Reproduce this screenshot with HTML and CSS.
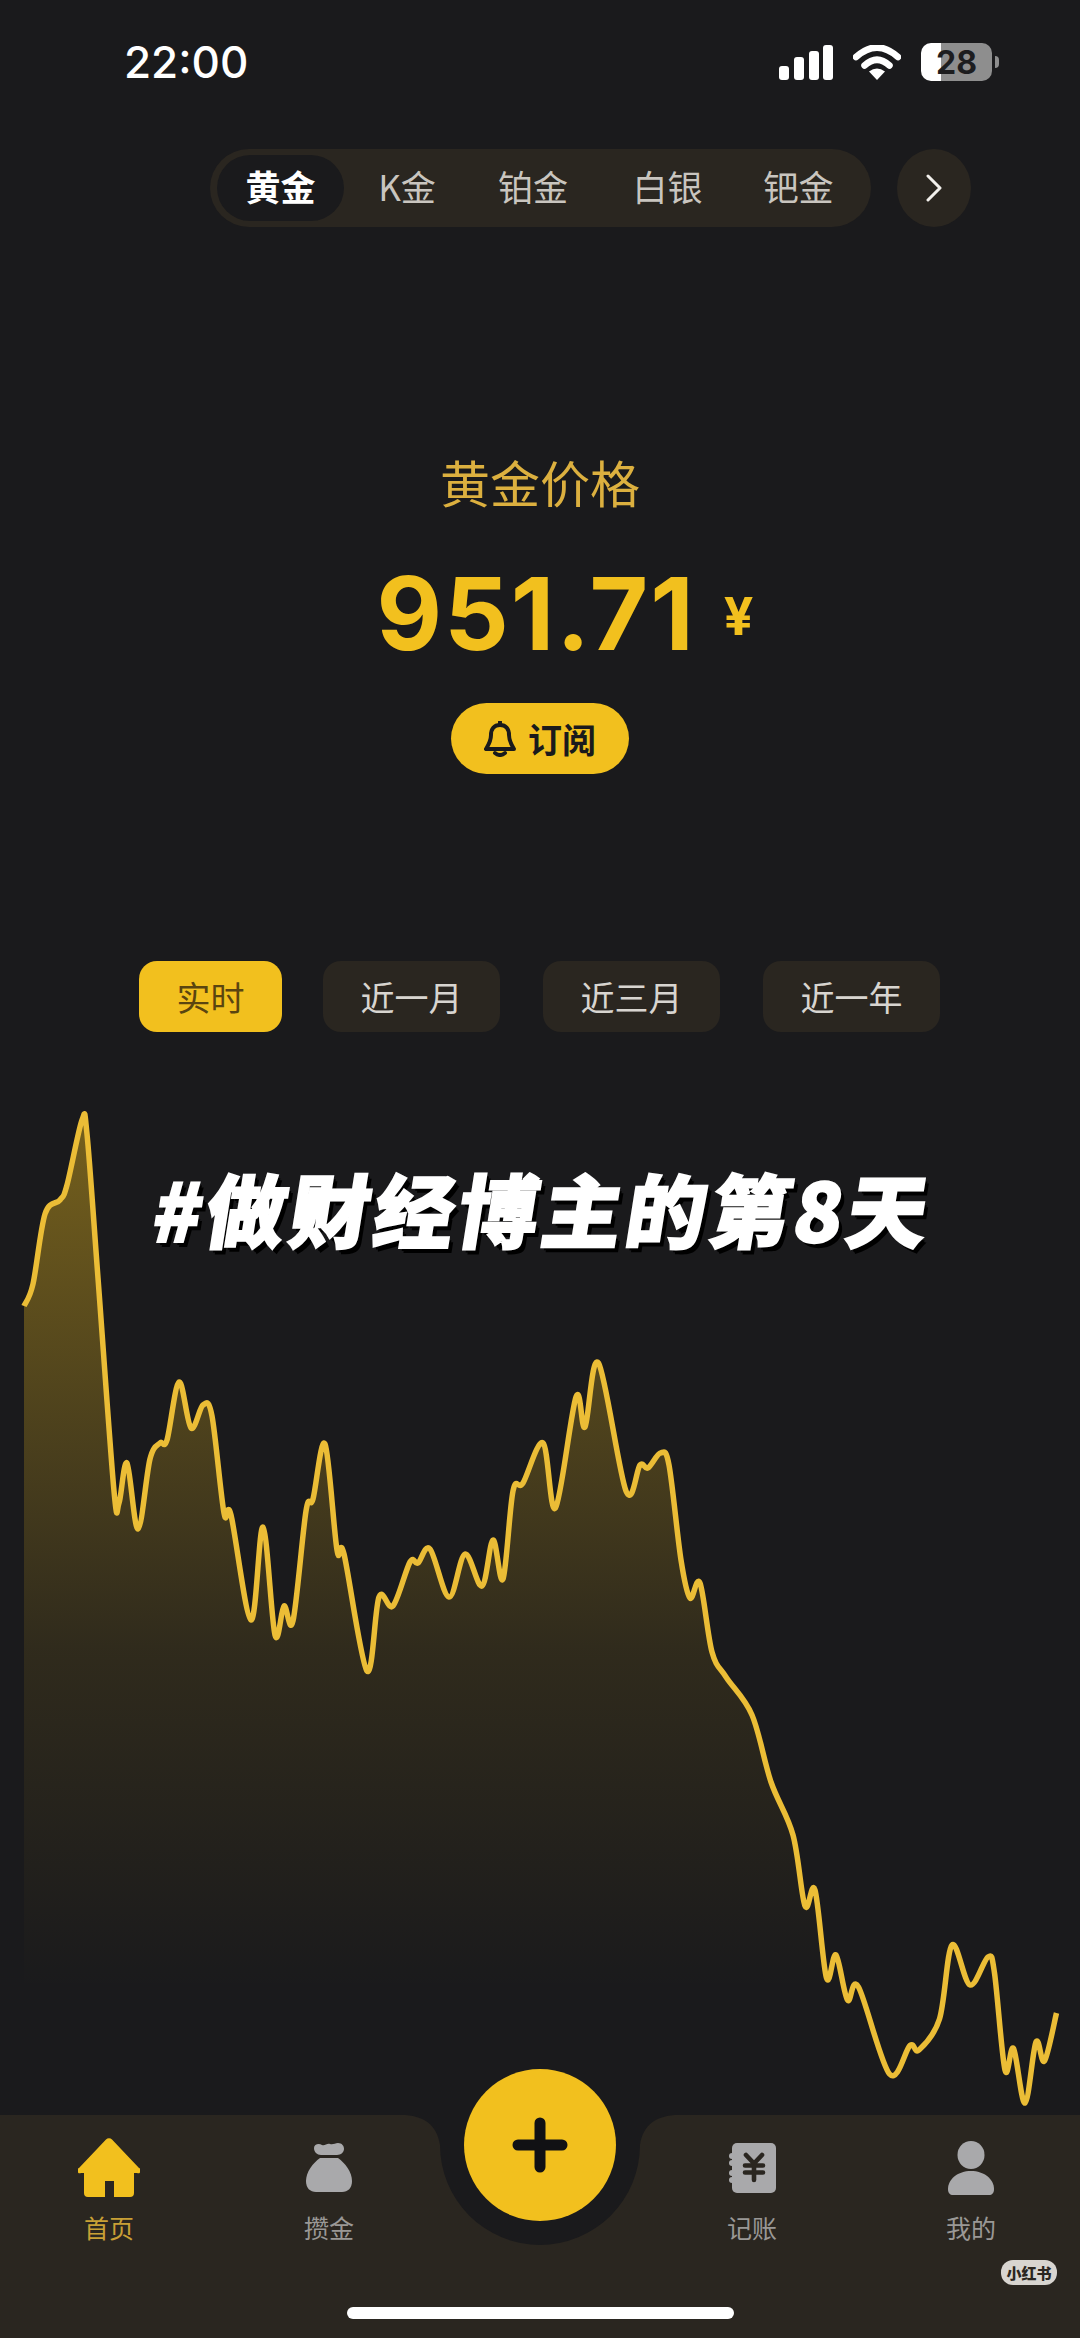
FILE: index.html
```html
<!DOCTYPE html>
<html lang="zh-CN">
<head>
    <meta charset="utf-8">
    <title>黄金价格</title>
    <link rel="stylesheet" href="styles.css">
</head>
<body>
    <div class="phone">
        <div class="status-bar">
            <div class="time">22:00</div>
            <div class="status-icons">
                <svg class="signal" viewBox="0 0 54 35" width="54" height="35">
                    <rect x="0" y="21" width="10" height="14" rx="3"/>
                    <rect x="15" y="12" width="10" height="23" rx="3"/>
                    <rect x="30" y="6" width="10" height="29" rx="3"/>
                    <rect x="44" y="0" width="10" height="35" rx="3"/>
                </svg>
                <svg class="wifi" viewBox="0 0 48 35" width="48" height="35">
                    <path d="M3 12Q24 -7 45 12" fill="none" stroke="#fff" stroke-width="6.5" stroke-linecap="round"/>
                    <path d="M11.5 20.5Q24 9 36.5 20.5" fill="none" stroke="#fff" stroke-width="6.5" stroke-linecap="round"/>
                    <path d="M24 35L16 26.5Q24 20.5 32 26.5Z" fill="#fff"/>
                </svg>
                <div class="battery"><span>28</span></div>
            </div>
        </div>

        <div class="metal-row">
            <div class="metal-tabs">
                <div class="metal-tab active">黄金</div>
                <div class="metal-tab k">K金</div>
                <div class="metal-tab pt">铂金</div>
                <div class="metal-tab ag">白银</div>
                <div class="metal-tab pd">钯金</div>
            </div>
            <div class="metal-next">
                <svg viewBox="0 0 18 28" width="18" height="28">
                    <path d="M3 2L15 14L3 26" fill="none" stroke="#f2f0ec" stroke-width="3" stroke-linecap="round" stroke-linejoin="round"/>
                </svg>
            </div>
        </div>

        <div class="price-title">黄金价格</div>
        <div class="price-row">
            <span class="price">951.71</span>
            <span class="price-unit">¥</span>
        </div>
        <div class="subscribe-wrap">
            <div class="subscribe">
                <svg viewBox="0 0 32 36" width="32" height="36">
                    <path d="M16 4C10 4 7 8 7 14C7 20 5 23 2 28H30C27 23 25 20 25 14C25 8 22 4 16 4Z" fill="none" stroke="#1a1a1c" stroke-width="4" stroke-linejoin="round"/>
                    <path d="M16 1V4M11 32Q16 36 21 32" fill="none" stroke="#1a1a1c" stroke-width="4" stroke-linecap="round"/>
                </svg>
                <span>订阅</span>
            </div>
        </div>

        <div class="ranges">
            <div class="range active">实时</div>
            <div class="range">近一月</div>
            <div class="range">近三月</div>
            <div class="range">近一年</div>
        </div>

        <div class="chart">
            <svg viewBox="0 1100 1080 1015" width="1080" height="1015">
                <defs>
                    <linearGradient id="chartFill" gradientUnits="userSpaceOnUse" x1="0" y1="1116" x2="0" y2="1990">
                        <stop offset="0" stop-color="#f2c01e" stop-opacity="0.42"/>
                        <stop offset="0.44" stop-color="#f2c01e" stop-opacity="0.19"/>
                        <stop offset="0.61" stop-color="#f2c01e" stop-opacity="0.1"/>
                        <stop offset="1" stop-color="#f2c01e" stop-opacity="0"/>
                    </linearGradient>
                </defs>
                <path id="chartArea" fill="url(#chartFill)"/>
                <path id="chartLine" fill="none" stroke="#ebbd36" stroke-width="5.5" stroke-linejoin="round"/>
            </svg>
            <div class="caption"><span>#做财经博主的第8天</span></div>
        </div>

        <div class="nav">
            <svg class="nav-bg" viewBox="0 0 1080 223" width="1080" height="223">
                <path d="M0 0H401C424 0 437 10 440 30A100 100 0 0 0 640 30C643 10 656 0 679 0H1080V223H0Z" fill="#2a2620"/>
            </svg>
            <div class="nav-item active">
                <div class="nav-icon">
                    <svg viewBox="0 0 62 59" width="62" height="59">
                        <path d="M28 1.5a4 4 0 0 1 6 0L61 30a2.5 2.5 0 0 1-2 5h-3v20a4 4 0 0 1-4 4H36V43H27v16H10a4 4 0 0 1-4-4V35H3a2.5 2.5 0 0 1-2-5z" fill="#f2c01e"/>
                    </svg>
                </div>
                <span>首页</span>
            </div>
            <div class="nav-item">
                <div class="nav-icon">
                    <svg viewBox="0 0 46 49" width="46" height="49">
                        <path d="M8 5C8 1 13 0 16 2C19 3 21 0 24 1C27 2 29 0 32 0C36 0 38 3 38 6C38 9 35 12 31 12H15C11 12 8 9 8 5Z" fill="#a9a9ab"/>
                        <path d="M14 15H32C39 20 46 29 46 38C46 45 42 49 36 49H10C4 49 0 45 0 38C0 29 7 20 14 15Z" fill="#a9a9ab"/>
                    </svg>
                </div>
                <span>攒金</span>
            </div>
            <div class="nav-gap"></div>
            <div class="nav-item">
                <div class="nav-icon">
                    <svg viewBox="0 0 47 50" width="47" height="50">
                        <rect x="3" y="0" width="44" height="50" rx="5" fill="#a9a9ab"/>
                        <circle cx="3" cy="13" r="3" fill="#a9a9ab"/>
                        <circle cx="3" cy="20" r="3" fill="#a9a9ab"/>
                        <circle cx="3" cy="30" r="3" fill="#a9a9ab"/>
                        <circle cx="3" cy="37" r="3" fill="#a9a9ab"/>
                        <path d="M17 12L25 20.5L33 12M16 22.5H34M16 29.5H34M25 21V37" fill="none" stroke="#2a2620" stroke-width="4.6" stroke-linecap="round" stroke-linejoin="round"/>
                    </svg>
                </div>
                <span>记账</span>
            </div>
            <div class="nav-item">
                <div class="nav-icon">
                    <svg viewBox="0 0 46 54" width="46" height="54">
                        <ellipse cx="23" cy="14" rx="13.5" ry="14" fill="#a9a9ab"/>
                        <path d="M0 48C0 38 10 30 23 30S46 38 46 48C46 52 44 54 41 54H5C2 54 0 52 0 48Z" fill="#a9a9ab"/>
                    </svg>
                </div>
                <span>我的</span>
            </div>
            <div class="fab">
                <svg viewBox="0 0 56 56" width="56" height="56">
                    <path d="M6 28H50M28 6V50" fill="none" stroke="#111114" stroke-width="11" stroke-linecap="round"/>
                </svg>
            </div>
            <div class="watermark">小红书</div>
            <div class="home-bar"></div>
        </div>
    </div>

    <script src="chart.js"></script>
</body>
</html>
```

FILE: styles.css
```css
* {
    box-sizing: border-box;
}

body {
    margin: 0;
    background-color: #1a1a1c;
    font-family: "Noto Sans CJK SC", "Noto Sans", sans-serif;
}

.phone {
    width: 1080px;
    height: 2338px;
    overflow: hidden;
    display: flex;
    flex-direction: column;
    background-color: #1a1a1c;
}

/* status bar */
.status-bar {
    height: 124px;
    flex: none;
    padding: 0 88px 0 124px;
    display: flex;
    justify-content: space-between;
    align-items: center;
    color: #fff;
}

.time {
    font-family: Inter, sans-serif;
    font-size: 44px;
    font-weight: 500;
}

.status-icons {
    display: flex;
    align-items: center;
    gap: 20px;
}

.signal {
    fill: #fff;
}

.battery {
    position: relative;
    width: 71px;
    height: 38px;
    border-radius: 10px;
    background: linear-gradient(to right, #fff 28%, #8e8e8e 28%);
    display: flex;
    justify-content: center;
    align-items: center;
    color: #1d1d1f;
    font-family: Inter, sans-serif;
    font-size: 32px;
    font-weight: 700;
}

.battery::after {
    content: "";
    position: absolute;
    right: -7px;
    top: 13px;
    width: 4px;
    height: 12px;
    border-radius: 0 4px 4px 0;
    background-color: #8e8e8e;
}

/* metal tabs */
.metal-row {
    flex: none;
    margin-top: 25px;
    padding-left: 210px;
    display: flex;
    gap: 26px;
}

.metal-tabs {
    width: 661px;
    height: 78px;
    padding: 6px 7px;
    border-radius: 39px;
    background-color: #2a2620;
    display: flex;
    align-items: stretch;
}

.metal-tab {
    padding-bottom: 5px;
    font-size: 35px;
    color: #c9c5bf;
    display: flex;
    justify-content: center;
    align-items: center;
}

.metal-tab.active {
    width: 127px;
    border-radius: 33px;
    background-color: #1a1a1c;
    color: #fff;
    font-weight: 700;
}

.metal-tab.k {
    width: 126px;
}

.metal-tab.pt {
    width: 126px;
}

.metal-tab.ag {
    width: 143px;
}

.metal-tab.pd {
    width: 119px;
}

.metal-next {
    width: 74px;
    height: 78px;
    border-radius: 50%;
    background-color: #2a2620;
    display: flex;
    justify-content: center;
    align-items: center;
}

/* price */
.price-title {
    flex: none;
    margin-top: 224px;
    height: 60px;
    line-height: 60px;
    text-align: center;
    font-size: 50px;
    color: #dcb03f;
}

.price-row {
    flex: none;
    margin-top: 52px;
    height: 100px;
    padding-left: 50px;
    display: flex;
    justify-content: center;
    align-items: center;
    gap: 28px;
    color: #f2c01e;
    font-family: Inter, sans-serif;
    font-weight: 700;
}

.price {
    font-size: 101px;
    line-height: 100px;
    letter-spacing: 2px;
}

.price-unit {
    font-size: 52px;
    line-height: 100px;
    padding-top: 8px;
}

.subscribe-wrap {
    flex: none;
    margin-top: 40px;
    display: flex;
    justify-content: center;
}

.subscribe {
    width: 178px;
    height: 71px;
    border-radius: 36px;
    background-color: #f2c01e;
    color: #1a1a1c;
    font-size: 34px;
    font-weight: 700;
    display: flex;
    justify-content: center;
    align-items: center;
    gap: 12px;
}

/* range buttons */
.ranges {
    flex: none;
    margin-top: 187px;
    padding-left: 139px;
    display: flex;
    gap: 43px;
}

.range {
    width: 177px;
    height: 71px;
    border-radius: 18px;
    background-color: #2a2620;
    color: #d8d5d0;
    font-size: 34px;
    display: flex;
    justify-content: center;
    align-items: center;
}

.range.active {
    width: 143px;
    margin-right: -2px;
    background-color: #f2c01e;
    color: #5a4510;
}

/* chart */
.chart {
    position: relative;
    flex: none;
    margin-top: 68px;
    height: 1015px;
}

.chart svg {
    display: block;
}

.caption {
    position: absolute;
    left: 0;
    right: 0;
    top: 52px;
    padding-left: 8px;
    text-align: center;
    color: #fff;
    font-size: 80px;
    line-height: 110px;
    font-weight: 900;
    letter-spacing: 4px;
    -webkit-text-stroke: 2px #fff;
    text-shadow: 5px 5px 0 #000, 3px 3px 0 #000;
}

.caption span {
    display: inline-block;
    transform: skewX(-9deg);
}

/* bottom nav */
.nav {
    position: relative;
    flex: none;
    height: 223px;
    display: grid;
    grid-template-columns: 218px 222px 202px 220px 218px;
    align-items: start;
}

.nav-bg {
    position: absolute;
    left: 0;
    top: 0;
}

.nav-item {
    position: relative;
    height: 127px;
    padding-top: 23px;
    display: flex;
    flex-direction: column;
    align-items: center;
    justify-content: space-between;
    color: #9a9896;
    font-size: 25px;
    line-height: 30px;
}

.nav-item.active {
    color: #c9a035;
}

.nav-icon {
    height: 59px;
    display: flex;
    align-items: center;
}

.fab {
    position: absolute;
    left: 464px;
    top: -46px;
    width: 152px;
    height: 152px;
    border-radius: 50%;
    background-color: #f2c01e;
    display: flex;
    justify-content: center;
    align-items: center;
}

.watermark {
    position: absolute;
    left: 1001px;
    top: 145px;
    width: 56px;
    height: 25px;
    border-radius: 12px;
    background-color: #d8d5d0;
    color: #2a2620;
    font-size: 15px;
    font-weight: 900;
    line-height: 25px;
    text-align: center;
}

.home-bar {
    position: absolute;
    left: 347px;
    top: 192px;
    width: 387px;
    height: 12px;
    border-radius: 6px;
    background-color: #fff;
}
```

FILE: chart.js
```js
// points read off the price curve, in page pixels
const points = [
    [24,1306],[33,1284],[45,1214],[60,1200],[67,1185],[82,1120],[87,1134],[98,1278],
    [114,1491],[119,1503],[127,1463],[138,1529],[150,1459],[160,1443],[167,1440],
    [179,1382],[191,1428],[203,1405],[212,1416],[224,1513],[231,1515],[251,1620],
    [263,1527],[275,1635],[284,1606],[293,1621],[306,1511],[313,1499],[325,1444],
    [337,1550],[344,1554],[367,1671],[379,1597],[393,1606],[410,1562],[418,1563],
    [430,1549],[449,1597],[465,1554],[482,1586],[493,1540],[503,1579],[513,1491],
    [523,1483],[543,1443],[555.5,1508],[576,1397],[585,1427],[598.5,1363],[626,1491],
    [640,1465],[648,1468],[660.5,1453],[669,1465],[681,1560],[690,1598],[700,1583],
    [712,1652],[726,1677],[752,1715],[771,1782],[793,1835],[805,1906],[815,1890],
    [826.5,1978],[836,1955],[847.5,2000],[858.5,1987],[889.5,2074],[910,2045.5],
    [919,2050],[939.5,2019],[952,1945],[970,1985],[988,1957],[994.5,1973],[1005,2070],
    [1013.5,2048.5],[1025,2103],[1036,2042],[1044.5,2061],[1056.5,2013]
];

// catmull-rom through the points so the line stays smooth
let line = `M${points[0][0]} ${points[0][1]}`;
for (let i = 0; i < points.length - 1; i++) {
    const p0 = points[i - 1] || points[i];
    const p1 = points[i];
    const p2 = points[i + 1];
    const p3 = points[i + 2] || p2;
    const c1x = p1[0] + (p2[0] - p0[0]) / 6;
    const c1y = p1[1] + (p2[1] - p0[1]) / 6;
    const c2x = p2[0] - (p3[0] - p1[0]) / 6;
    const c2y = p2[1] - (p3[1] - p1[1]) / 6;
    line += `C${c1x} ${c1y} ${c2x} ${c2y} ${p2[0]} ${p2[1]}`;
}

document.getElementById('chartLine').setAttribute('d', line);
document.getElementById('chartArea').setAttribute('d', `${line}V2115H24Z`);
```
